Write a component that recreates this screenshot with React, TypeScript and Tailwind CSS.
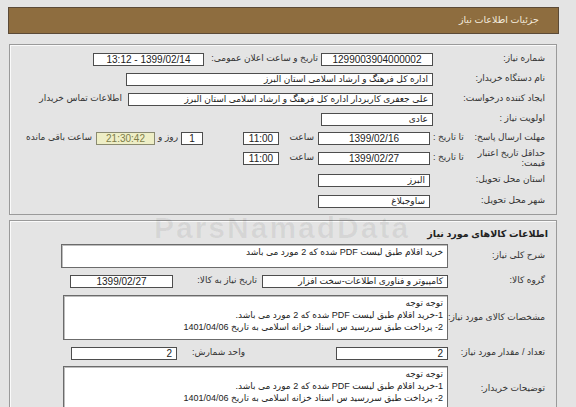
import React from 'react';

const font = { fontFamily: '"Liberation Sans", "DejaVu Sans", sans-serif' };

function Field({ className = '', children }: { className?: string; children?: React.ReactNode }) {
  return (
    <div
      className={`h-[13px] shrink-0 border border-[#4d4d4d] bg-white px-1 text-[9px] leading-[11px] text-[#222] whitespace-nowrap overflow-hidden ${className}`}
    >
      {children}
    </div>
  );
}

function Label({ className = '', children }: { className?: string; children: React.ReactNode }) {
  return <div className={`shrink-0 text-[9px] text-[#333] whitespace-nowrap ${className}`}>{children}</div>;
}

function Area({ className = '', lines }: { className?: string; lines: string[] }) {
  return (
    <div
      className={`shrink-0 border border-[#6b6b6b] bg-white px-1 pt-[1px] text-[9px] leading-[12px] text-[#222] overflow-hidden shadow-[inset_1px_1px_0_#bdbdbd] ${className}`}
    >
      {lines.map((l) => (
        <div key={l} className="whitespace-nowrap">
          {l}
        </div>
      ))}
    </div>
  );
}

const notes = [
  'توجه توجه',
  '1-خرید اقلام طبق لیست PDF شده  که 2 مورد می باشد.',
  '2- پرداخت طبق سررسید س اسناد خزانه اسلامی  به تاریخ 1401/04/06',
];

export default function App() {
  return (
    <div dir="rtl" style={font} className="relative w-[576px] h-[407px] overflow-hidden bg-[#e4e4e4]">
      <div className="ml-[8px] mr-[17px] mt-[7px] h-[27px] border border-[#5b4a37] bg-[#8e6d3f] flex items-center pr-[19px] text-[9.5px] text-[#f3ebdd]">
        جزئیات اطلاعات نیاز
      </div>

      {/* panel 1 */}
      <div className="ml-[9px] mr-[19px] mt-[10px] border border-[#9a9a9a] shadow-[inset_1px_1px_0_#fafafa] pt-[4px] pb-[3px] pr-[11px]">
        <div className="h-[20px] flex items-center">
          <Label className="w-[108px]">شماره نیاز:</Label>
          <Field className="mr-[4px] w-[112px] text-center text-[10px]">1299003904000002</Field>
          <Label className="mr-[3px] w-[114px]">تاریخ و ساعت اعلان عمومی:</Label>
          <Field className="w-[111px] text-center text-[10px]">1399/02/14 - 13:12</Field>
        </div>
        <div className="h-[20px] flex items-center">
          <Label className="w-[108px]">نام دستگاه خریدار:</Label>
          <Field className="mr-[4px] w-[307px]">اداره کل فرهنگ و ارشاد اسلامی استان البرز</Field>
        </div>
        <div className="h-[20px] flex items-center">
          <Label className="w-[108px]">ایجاد کننده درخواست:</Label>
          <Field className="mr-[4px] w-[305px]">علی جعفری کاربردار اداره کل فرهنگ و ارشاد اسلامی استان البرز</Field>
          <Label className="mr-[6px] text-[#2b2bb0]">اطلاعات تماس خریدار</Label>
        </div>
        <div className="h-[20px] flex items-center">
          <Label className="w-[108px]">اولویت نیاز :</Label>
          <Field className="mr-[4px] w-[112px]">عادی</Field>
        </div>
        <div className="h-[18px] flex items-center">
          <div className="w-[112px] flex justify-between shrink-0">
            <Label>مهلت ارسال پاسخ:</Label>
            <Label>تا تاریخ :</Label>
          </div>
          <Field className="mr-[3px] w-[112px] text-center text-[10px]">1399/02/16</Field>
          <Label className="mr-[4px] w-[25px]">ساعت</Label>
          <Field className="mr-[10px] w-[36px] text-center text-[10px]">11:00</Field>
          <Field className="mr-[40px] w-[22px] text-center text-[10px]">1</Field>
          <Label className="mr-[3px] w-[20px]">روز و</Label>
          <Field className="mr-[3px] w-[59px] text-center text-[10px] !bg-[#eeeec6] !text-[#7d7d4a] !border-[#8a8a70]">21:30:42</Field>
          <Label className="mr-[4px]">ساعت باقی مانده</Label>
        </div>
        <div className="h-[22px] flex items-center">
          <div className="w-[112px] flex justify-between items-center shrink-0">
            <Label className="leading-[10px]">
              حداقل تاریخ اعتبار
              <br />
              قیمت:
            </Label>
            <Label>تا تاریخ :</Label>
          </div>
          <Field className="mr-[3px] w-[112px] text-center text-[10px]">1399/02/27</Field>
          <Label className="mr-[4px] w-[25px]">ساعت</Label>
          <Field className="mr-[10px] w-[36px] text-center text-[10px]">11:00</Field>
        </div>
        <div className="h-[22px] flex items-center">
          <Label className="w-[112px]">استان محل تحویل:</Label>
          <Field className="mr-[3px] w-[112px]">البرز</Field>
        </div>
        <div className="h-[20px] flex items-center">
          <Label className="w-[112px]">شهر محل تحویل:</Label>
          <Field className="mr-[3px] w-[112px]">ساوجبلاغ</Field>
        </div>
      </div>

      {/* panel 2 */}
      <div className="ml-[9px] mr-[19px] mt-[5px] h-[200px] border border-[#9a9a9a] shadow-[inset_1px_1px_0_#fafafa] pt-[5px] pr-[11px]">
        <div className="h-[16px] flex items-center">
          <div className="-mr-[3px] text-[9.5px] font-bold text-[#222]">اطلاعات کالاهای مورد نیاز</div>
        </div>
        <div className="mt-[2px] h-[24px] flex items-center">
          <Label className="w-[93px]">شرح کلی نیاز:</Label>
          <Area className="mr-[4px] w-[387px] h-[24px]" lines={['خرید اقلام طبق لیست PDF شده  که 2 مورد می باشد']} />
        </div>
        <div className="mt-[7px] h-[12px] flex items-center">
          <Label className="w-[93px]">گروه کالا:</Label>
          <Field className="mr-[4px] w-[186px]">کامپیوتر و فناوری اطلاعات-سخت افزار</Field>
          <Label className="mr-[5px] w-[80px]">تاریخ نیاز به کالا:</Label>
          <Field className="mr-[4px] w-[103px] text-center text-[10px]">1399/02/27</Field>
        </div>
        <div className="mt-[8px] h-[45px] flex items-center">
          <Label className="w-[93px]">مشخصات کالای مورد نیاز:</Label>
          <Area className="mr-[4px] w-[385px] h-[45px]" lines={notes} />
        </div>
        <div className="mt-[7px] h-[12px] flex items-center">
          <Label className="w-[93px]">تعداد / مقدار مورد نیاز:</Label>
          <Field className="mr-[4px] w-[112px] text-[10px]">2</Field>
          <Label className="mr-[91px] w-[60px]">واحد شمارش:</Label>
          <Field className="mr-[8px] w-[106px] text-[10px]">2</Field>
        </div>
        <div className="mt-[7px] h-[46px] flex items-center">
          <Label className="w-[93px]">توضیحات خریدار:</Label>
          <Area className="mr-[4px] w-[385px] h-[46px]" lines={notes} />
        </div>
      </div>

      {/* watermark */}
      <div
        dir="ltr"
        className="pointer-events-none absolute left-[154px] top-[213px] text-[30px] leading-[30px] font-bold tracking-[2px] text-black/[0.06]"
      >
        ParsNamadData
      </div>
    </div>
  );
}
